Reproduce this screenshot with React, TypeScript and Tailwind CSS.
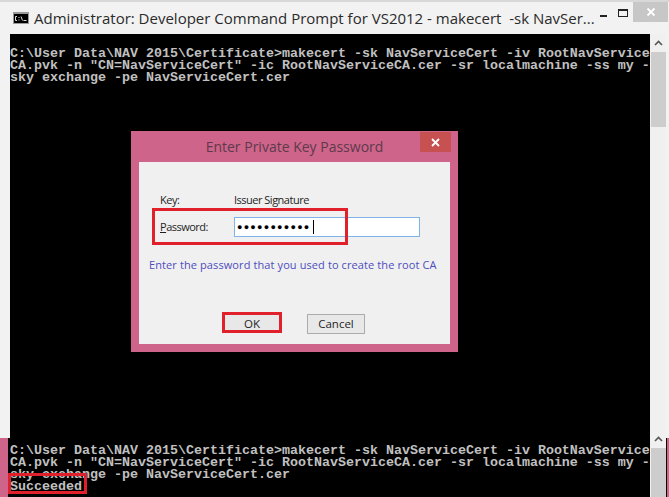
const mono = "font-['Liberation_Mono',monospace]";
const ui = "font-['Open_Sans','Noto_Sans',sans-serif]";

const lines = [
  'C:\\User Data\\NAV 2015\\Certificate>makecert -sk NavServiceCert -iv RootNavService',
  'CA.pvk -n "CN=NavServiceCert" -ic RootNavServiceCA.cer -sr localmachine -ss my -',
  'sky exchange -pe NavServiceCert.cer',
];

function ConsoleLines() {
  return (
    <>
      {lines.map((l) => (
        <div key={l} className="h-3 whitespace-pre">
          {l}
        </div>
      ))}
    </>
  );
}

function ScrollArrow() {
  return (
    <div className="h-[18px] flex items-center justify-center">
      <svg width="9" height="6" viewBox="0 0 9 6">
        <path d="M1 5 L4.5 1.5 L8 5" fill="none" stroke="#555" strokeWidth="1.6" />
      </svg>
    </div>
  );
}

export default function App() {
  return (
    <div className="relative w-[669px] h-[497px] overflow-hidden bg-black">
      <div className="flex flex-col h-full">
        {/* title bar */}
        <div className="h-[2px] bg-[#d8d8d8]" />
        <div className="h-8 flex bg-[#f2f2f2]">
          <div className="w-[13px] shrink-0" />
          <svg width="16" height="12" viewBox="0 0 16 12" className="mt-[10px] shrink-0">
            <rect width="16" height="12" fill="#9a9a9a" />
            <rect x="1" y="2" width="14" height="9" fill="#000" />
            <path d="M4 4.5h-1.5v4h1.5M6 5v1M6 7.5v1M8 4.5l1.5 4M10.5 8.5h3" stroke="#ddd" strokeWidth="1" fill="none" />
          </svg>
          <div className={`${ui} ml-[5px] pt-[6px] text-[15px] leading-5 text-[#2b2b2b] whitespace-pre`}>
            Administrator: Developer Command Prompt for VS2012 - makecert  -sk NavSer...
          </div>
          <div className="flex-1" />
          <div className="w-[22px] flex justify-center pt-[13px]">
            <div className="w-[7px] h-[2px] bg-[#222]" />
          </div>
          <div className="w-[28px] flex justify-center pt-[7px]">
            <div className="w-[10px] h-[8px] border border-[#222] border-t-2" />
          </div>
          <div className="w-[45px] h-[20px] bg-[#c7c7c7] flex items-center justify-center">
            <svg width="10" height="10" viewBox="0 0 10 10">
              <path d="M1.5 1.5l7 7M8.5 1.5l-7 7" stroke="#fff" strokeWidth="1.8" />
            </svg>
          </div>
          <div className="w-px" />
        </div>

        {/* console */}
        <div className="flex-1 flex min-h-0">
          <div className="w-[10px] flex flex-col">
            <div className="h-[404px] bg-[#f2f2f2]" />
            <div className="flex-1 w-2 bg-[#cf648a]" />
          </div>
          <div className={`${mono} w-[640px] flex flex-col bg-black text-[13.33px] leading-3 font-bold text-[#c0c0c0]`}>
            <div className="pt-[14px]">
              <ConsoleLines />
            </div>
            <div className="mt-[361px]">
              <ConsoleLines />
              <div className="h-3">Succeeded</div>
            </div>
          </div>
          <div className="w-[19px] flex">
            <div className="w-4 pl-px flex flex-col bg-[#f0f0f0]">
              <ScrollArrow />
              <div className="h-[75px] bg-[#cdcdcd]" />
              <div className="h-[303px]" />
              <ScrollArrow />
              <div className="flex-1 bg-[#cdcdcd]" />
            </div>
            <div className="flex-1 flex flex-col">
              <div className="h-[404px] bg-[#f2f2f2]" />
              <div className="flex-1 ml-px bg-[#cf648a]" />
            </div>
          </div>
        </div>
      </div>

      {/* dialog */}
      <div className={`${ui} absolute left-[131px] top-[131px] w-[327px] h-[221px] bg-[#cf648a] flex flex-col px-2 pb-2`}>
        <div className="h-[31px] shrink-0 flex justify-center items-center relative">
          <span className="text-[14px] text-[#5d3a4a]">Enter Private Key Password</span>
          <div className="absolute right-[-1px] top-[1px] w-[31px] h-[20px] bg-[#c75050] flex items-center justify-center">
            <svg width="9" height="9" viewBox="0 0 9 9">
              <path d="M1 1l7 7M8 1l-7 7" stroke="#fff" strokeWidth="1.8" />
            </svg>
          </div>
        </div>
        <div className="flex-1 bg-[#f0f0f0] flex flex-col text-[11px] text-[#1f1f1f] tracking-[-0.5px]">
          <div className="flex h-[14px] mt-[31px] items-center pl-[21px]">
            <span className="w-[74px]">Key:</span>
            <span>Issuer Signature</span>
          </div>
          <div className="flex items-center mt-[10px] pl-[21px]">
            <span className="w-[74px] pt-px"><span className="underline">P</span>assword:</span>
            <div className="w-[186px] h-[20px] bg-white border border-[#7eb4ea] flex items-center pl-[2px] text-black text-[9px] tracking-[1.25px]">
              ●●●●●●●●●●●
              <div className="ml-[2px] w-px h-[14px] bg-black" />
            </div>
          </div>
          <div className="pl-[10px] mt-[20px] text-[11px] leading-4 tracking-[0.1px] whitespace-nowrap text-[#4d4dbf]">
            Enter the password that you used to create the root CA
          </div>
          <div className="flex mt-[41px] pl-[86px] gap-[28px] tracking-normal text-[11.5px]">
            <button className="w-[54px] h-[18px] mt-[1px] flex items-center justify-center bg-[#e8e8e8]">OK</button>
            <button className="w-[58px] h-[20px] flex items-center justify-center border border-[#acacac] bg-[#e8e8e8]">Cancel</button>
          </div>
        </div>
      </div>

      {/* red annotation boxes */}
      <div className="absolute left-[152px] top-[208px] w-[196px] h-[37px] border-[3px] border-[#e0202a]" />
      <div className="absolute left-[222px] top-[312px] w-[60px] h-[21px] border-[3px] border-[#e0202a]" />
      <div className="absolute left-[8px] top-[473px] w-[79px] h-[21px] border-[3px] border-[#e0202a]" />
    </div>
  );
}
